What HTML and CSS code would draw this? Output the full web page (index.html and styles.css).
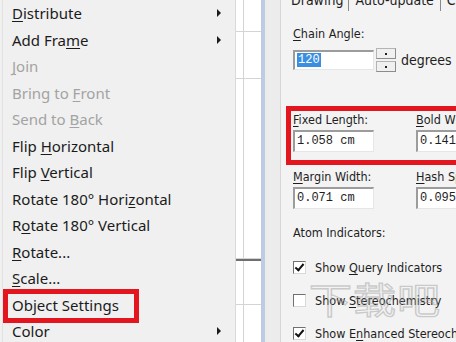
FILE: index.html
```html
<!DOCTYPE html>
<html lang="en">
<head>
    <meta charset="UTF-8">
    <title>Object Settings</title>
    <link rel="stylesheet" href="styles.css">
</head>
<body>
    <div class="menu">
        <div class="menu-item"><span><u>D</u>istribute</span><i class="arrow"></i></div>
        <div class="menu-item"><span>Add Fra<u>m</u>e</span><i class="arrow"></i></div>
        <div class="menu-item disabled"><span><u>J</u>oin</span></div>
        <div class="menu-item disabled"><span>Bring to <u>F</u>ront</span></div>
        <div class="menu-item disabled"><span>Send to <u>B</u>ack</span></div>
        <div class="menu-item"><span>Flip <u>H</u>orizontal</span></div>
        <div class="menu-item"><span>Flip <u>V</u>ertical</span></div>
        <div class="menu-item"><span>Rotate 180° Hori<u>z</u>ontal</span></div>
        <div class="menu-item"><span>R<u>o</u>tate 180° Vertical</span></div>
        <div class="menu-item"><span><u>R</u>otate...</span></div>
        <div class="menu-item"><span><u>S</u>cale...</span></div>
        <div class="menu-item marked"><span>Object Settings</span></div>
        <div class="menu-item"><span>Color</span><i class="arrow"></i></div>
    </div>

    <div class="canvas">
        <div class="cell" style="height: 31px"></div>
        <div class="cell" style="height: 46px"></div>
        <div class="cell" style="height: 179px"></div>
        <div class="cell dark" style="height: 43px"></div>
        <div class="cell last"></div>
    </div>

    <div class="dialog">
        <div class="side"></div>
        <div class="panel">
            <div class="tabs">
                <span class="tab active">Drawing</span>
                <span class="tab">Auto-update</span>
                <span class="tab">Cap</span>
            </div>

            <div class="label first"><u>C</u>hain Angle:</div>
            <div class="angle-row">
                <div class="field angle"><span class="selected">120</span></div>
                <div class="spinner">
                    <div class="spin-btn"><i></i></div>
                    <div class="spin-btn"><i></i></div>
                </div>
                <span class="unit">degrees</span>
            </div>

            <div class="field-group marked-group">
                <div class="col">
                    <div class="label"><u>F</u>ixed Length:</div>
                    <div class="field">1.058 cm</div>
                </div>
                <div class="col">
                    <div class="label"><u>B</u>old Width:</div>
                    <div class="field">0.141 cm</div>
                </div>
            </div>

            <div class="field-group">
                <div class="col">
                    <div class="label"><u>M</u>argin Width:</div>
                    <div class="field">0.071 cm</div>
                </div>
                <div class="col">
                    <div class="label"><u>H</u>ash Spacing:</div>
                    <div class="field">0.095 cm</div>
                </div>
            </div>

            <div class="label section">Atom Indicators:</div>
            <div class="check checked"><span class="box"></span><span>Show <u>Q</u>uery Indicators</span></div>
            <div class="check"><span class="box"></span><span>Show <u>S</u>tereochemistry</span></div>
            <div class="check checked"><span class="box"></span><span>Show E<u>n</u>hanced Stereochemistry</span></div>

            <div class="watermark">下载吧</div>
        </div>
    </div>
</body>
</html>
```

FILE: styles.css
```css
body {
    margin: 0;
    width: 456px;
    height: 342px;
    overflow: hidden;
    display: flex;
    background-color: #f0f0f0;
}
u {
    text-decoration-thickness: 1px;
    text-underline-offset: 2px;
}

/* context menu */
.menu {
    width: 235px;
    flex-shrink: 0;
    background-color: #f0f0f0;
    border-right: 1px solid #d9d9d9;
    box-shadow: inset 2px 0 0 #f0f0f0, inset 3px 0 0 #e2e2e2;
    font-family: "Noto Sans", sans-serif;
    font-size: 15px;
    color: #1b1b1b;
}
.menu-item {
    height: 26.5px;
    display: flex;
    align-items: center;
    justify-content: space-between;
    padding: 0 14px 0 12px;
    position: relative;
}
.menu-item.disabled {
    color: #a3a3a3;
}
.arrow {
    width: 0;
    height: 0;
    border-top: 4px solid transparent;
    border-bottom: 4px solid transparent;
    border-left: 4px solid #1b1b1b;
}
.menu-item.marked::after {
    content: "";
    position: absolute;
    left: 3px;
    top: -3px;
    width: 136px;
    height: 34px;
    border: 5px solid #e3151f;
    box-sizing: border-box;
}

/* drawing canvas strip */
.canvas {
    width: 25px;
    flex-shrink: 0;
    background-color: #fff;
    border-right: 4px solid #bccde3;
    display: flex;
    flex-direction: column;
    box-shadow: inset 7px 0 0 #fff, inset 8px 0 0 #d4d4d4;
}
.cell {
    border-bottom: 1px solid #d4d4d4;
}
.cell.dark {
    border-top: 2px solid #6f6f6f;
}
.cell.last {
    flex: 1;
    border-bottom: none;
}

/* settings dialog */
.dialog {
    flex: 1;
    display: flex;
    background-color: #ececec;
    font-family: "DejaVu Sans Condensed", "DejaVu Sans", sans-serif;
    font-size: 12.5px;
    color: #1e1e1e;
}
.side {
    width: 15px;
    flex-shrink: 0;
}
.panel {
    flex: 1;
    background-color: #f3f3f3;
    border-left: 1px solid #d6d6d6;
    padding-left: 12px;
    position: relative;
    overflow: hidden;
}
.tabs {
    height: 11px;
    display: flex;
    overflow: hidden;
    margin-left: -10px;
}
.tab {
    line-height: 14px;
    margin-top: -7px;
    padding: 0 6px;
    border-right: 1px solid #8a8a8a;
    white-space: nowrap;
    font-size: 14px;
}
.tab.active {
    padding-left: 8px;
    padding-right: 5px;
}
.label {
    height: 16px;
    line-height: 16px;
    white-space: nowrap;
}
.label.first {
    margin-top: 15px;
}
.angle-row {
    display: flex;
    align-items: center;
    margin-top: 6px;
    height: 24px;
}
.field {
    width: 79px;
    height: 20px;
    box-sizing: border-box;
    background-color: #fff;
    border-top: 2px solid #9c9c9c;
    border-left: 2px solid #9c9c9c;
    border-right: 1px solid #e6e6e6;
    border-bottom: 1px solid #e6e6e6;
    font-family: "Liberation Mono", monospace;
    font-size: 12px;
    line-height: 17px;
    padding-left: 2px;
    white-space: nowrap;
}
.field.angle {
    width: 81px;
}
.selected {
    background-color: #3b8fe0;
    color: #fff;
    padding: 0 1px;
}
.spinner {
    margin-left: 2px;
    display: flex;
    flex-direction: column;
    gap: 2px;
}
.spin-btn {
    width: 18px;
    height: 9px;
    border: 1px solid #b4b4b4;
    border-right-color: #8c8c8c;
    border-bottom-color: #8c8c8c;
    background-color: #f0f0f0;
    display: flex;
    align-items: center;
    justify-content: center;
}
.spin-btn i {
    width: 2px;
    height: 2px;
    background-color: #222;
}
.unit {
    margin-left: 5px;
    font-size: 14px;
}
.field-group {
    display: flex;
    gap: 42px;
    position: relative;
    margin-top: 40px;
}
.field-group .field {
    width: 81px;
    height: 22px;
    margin-top: 2px;
    line-height: 19px;
}
.field-group + .field-group {
    margin-top: 17px;
}
.marked-group::after {
    content: "";
    position: absolute;
    left: -7px;
    top: -6px;
    width: 200px;
    height: 59px;
    border: 5px solid #e3151f;
    box-sizing: border-box;
}
.label.section {
    margin-top: 16px;
}
.check {
    display: flex;
    align-items: center;
    height: 16px;
    white-space: nowrap;
    margin-top: 18px;
}
.check + .check {
    margin-top: 17px;
}
.box {
    width: 11px;
    height: 11px;
    margin-right: 9px;
    flex-shrink: 0;
    background-color: #fff;
    border-top: 1px solid #707070;
    border-left: 1px solid #707070;
    border-right: 1px solid #d8d8d8;
    border-bottom: 1px solid #d8d8d8;
    position: relative;
}
.check.checked .box::after {
    content: "";
    position: absolute;
    left: 3px;
    top: 0;
    width: 3px;
    height: 7px;
    border-right: 2px solid #111;
    border-bottom: 2px solid #111;
    transform: rotate(40deg);
}
.watermark {
    position: absolute;
    left: 28px;
    top: 280px;
    line-height: 1;
    font-family: "Noto Sans CJK SC", sans-serif;
    font-size: 43px;
    letter-spacing: 1px;
    color: transparent;
    -webkit-text-stroke: 1.5px rgba(160, 160, 160, 0.5);
    transform: scaleY(0.85);
    transform-origin: top left;
    pointer-events: none;
}
```
